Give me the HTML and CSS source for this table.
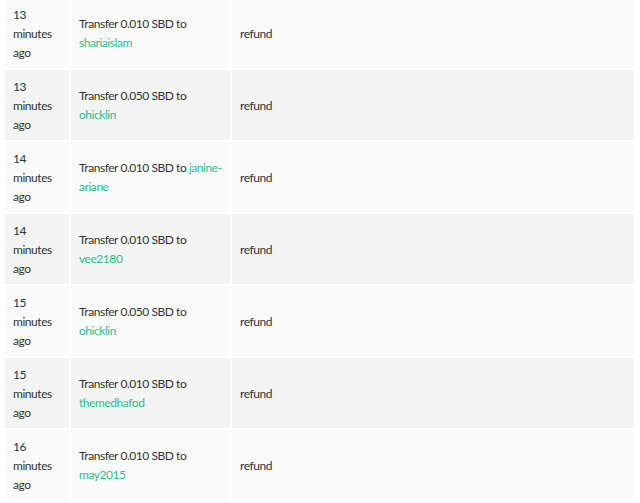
FILE: index.html
```html
<!DOCTYPE html>
<html lang="en">
<head>
<meta charset="utf-8">
<title>Transfers</title>
<link rel="stylesheet" href="styles.css">
</head>
<body>
<table class="history">
  <colgroup>
    <col class="c-time">
    <col class="c-desc">
    <col class="c-memo">
  </colgroup>
  <tbody>
    <tr><td>13 minutes ago</td><td>Transfer 0.010 SBD to <a href="#">shariaislam</a></td><td>refund</td></tr>
    <tr><td>13 minutes ago</td><td>Transfer 0.050 SBD to <a href="#">ohicklin</a></td><td>refund</td></tr>
    <tr><td>14 minutes ago</td><td>Transfer 0.010 SBD to <a href="#">janine-ariane</a></td><td>refund</td></tr>
    <tr><td>14 minutes ago</td><td>Transfer 0.010 SBD to <a href="#">vee2180</a></td><td>refund</td></tr>
    <tr><td>15 minutes ago</td><td>Transfer 0.050 SBD to <a href="#">ohicklin</a></td><td>refund</td></tr>
    <tr><td>15 minutes ago</td><td>Transfer 0.010 SBD to <a href="#">themedhafod</a></td><td>refund</td></tr>
    <tr><td>16 minutes ago</td><td>Transfer 0.010 SBD to <a href="#">may2015</a></td><td>refund</td></tr>
  </tbody>
</table>
</body>
</html>
```
FILE: styles.css
```css
html, body {
  margin: 0;
  padding: 0;
  background: #ffffff;
}
body {
  font-family: Lato, "Open Sans", "Liberation Sans", sans-serif;
  font-size: 12px;
  letter-spacing: -0.45px;
  color: #333333;
}
.history {
  margin: -4px 0 0 3px;
  border-collapse: separate;
  border-spacing: 2px;
  table-layout: fixed;
  width: 633px;
}
.c-time { width: 64px; }
.c-desc { width: 159px; }
.c-memo { width: 402px; }
.history td {
  height: 70px;
  box-sizing: border-box;
  padding: 6px 8px;
  line-height: 19px;
  vertical-align: middle;
}
.history tr:nth-child(odd) td { background: #fafafa; }
.history tr:nth-child(even) td { background: #f4f4f4; }
.history a {
  color: #1fbf8f;
  text-decoration: none;
}
```
